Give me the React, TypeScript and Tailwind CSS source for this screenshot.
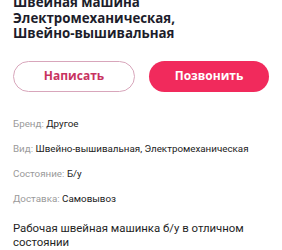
import React from "react";

export default function App() {
  const rows: [string, string][] = [
    ["Бренд:", "Другое"],
    ["Вид:", "Швейно-вышивальная, Электромеханическая"],
    ["Состояние:", "Б/у"],
    ["Доставка:", "Самовывоз"],
  ];
  return (
    <div className="w-[282px] h-[250px] overflow-hidden bg-white px-[13px]" style={{ fontFamily: 'Roboto, "Noto Sans", sans-serif' }}>
      <h1 className="mt-[-5px] text-[13.3px] leading-[15.5px] font-bold text-[#1d1d2b]" style={{ fontFamily: '"Open Sans", "Noto Sans", sans-serif' }}>
        Швейная машина
        <br />
        Электромеханическая,
        <br />
        Швейно-вышивальная
      </h1>
      <div className="mt-[19px] flex gap-[14px]">
        <button className="h-[31px] flex-1 rounded-full border border-[#d8a6bb] text-[12px] font-bold text-[#c8335f]" style={{ fontFamily: '"Open Sans", sans-serif' }}>
          Написать
        </button>
        <button className="h-[31px] flex-1 rounded-full bg-[#f12a5c] text-[12px] font-bold text-white" style={{ fontFamily: '"Open Sans", sans-serif' }}>
          Позвонить
        </button>
      </div>
      <div className="mt-[25px] flex flex-col gap-[11px]">
        {rows.map(([k, v]) => (
          <div key={k} className="whitespace-nowrap text-[9.8px] leading-[14px]">
            <span className="text-[#9a9a9a]">{k}</span>{" "}
            <span className="text-[#222]">{v}</span>
          </div>
        ))}
      </div>
      <p className="mt-[15px] text-[11.4px] leading-[14px] text-[#1f1f1f]">
        Рабочая швейная машинка б/у в отличном состоянии
      </p>
    </div>
  );
}
